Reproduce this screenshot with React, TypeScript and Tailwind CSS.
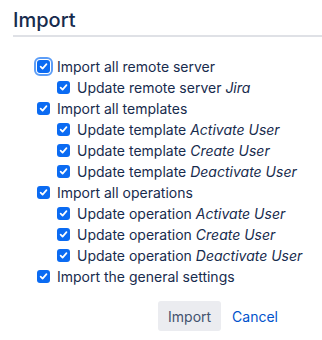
import React, { useState } from 'react';

type Item = { id: string; label: string; em?: string; level: number };

const ITEMS: Item[] = [
  { id: 'remote', label: 'Import all remote server', level: 0 },
  { id: 'remote-jira', label: 'Update remote server ', em: 'Jira', level: 1 },
  { id: 'templates', label: 'Import all templates', level: 0 },
  { id: 'tpl-activate', label: 'Update template ', em: 'Activate User', level: 1 },
  { id: 'tpl-create', label: 'Update template ', em: 'Create User', level: 1 },
  { id: 'tpl-deactivate', label: 'Update template ', em: 'Deactivate User', level: 1 },
  { id: 'operations', label: 'Import all operations', level: 0 },
  { id: 'op-activate', label: 'Update operation ', em: 'Activate User', level: 1 },
  { id: 'op-create', label: 'Update operation ', em: 'Create User', level: 1 },
  { id: 'op-deactivate', label: 'Update operation ', em: 'Deactivate User', level: 1 },
  { id: 'general', label: 'Import the general settings', level: 0 },
];

const Check = ({ focused }: { focused?: boolean }) => (
  <span
    className={`relative flex items-center justify-center w-[13px] h-[13px] rounded-[3px] bg-[#0b6bf2] shrink-0 ${
      focused ? 'outline-2 outline-[#5c9df7] outline-offset-[1px]' : ''
    }`}
  >
    <svg width="9" height="9" viewBox="0 0 10 10" fill="none">
      <path d="M1.8 5.2 L4 7.4 L8.3 2.4" stroke="white" strokeWidth="1.9" strokeLinecap="round" strokeLinejoin="round" />
    </svg>
  </span>
);

export default function App() {
  const [checked] = useState<Record<string, boolean>>(
    Object.fromEntries(ITEMS.map(i => [i.id, true]))
  );

  return (
    <div className="w-[322px] h-[340px] bg-white text-[#172b4d] font-['Inter',sans-serif]">
      <div className="pl-[13px] pt-[8px]">
        <h2 className="text-[20px] font-medium leading-[24px] pb-[3px] border-b-2 border-[#dfe1e6]">Import</h2>
      </div>

      <div className="pt-[19px] pl-[37px] flex flex-col">
        {ITEMS.map((item, idx) => (
          <label
            key={item.id}
            className={`flex items-center gap-[7px] h-[21px] text-[14px] ${item.level ? 'pl-[20px]' : ''}`}
          >
            {checked[item.id] && <Check focused={idx === 0} />}
            <span className="whitespace-nowrap">
              {item.label}
              {item.em && <em>{item.em}</em>}
            </span>
          </label>
        ))}
      </div>

      <div className="flex items-center justify-end gap-[11px] pr-[44px] pt-[14px]">
        <button className="h-[30px] w-[63px] rounded-[3px] bg-[#ebecf0] text-[14px] text-[#42526e]">Import</button>
        <button className="text-[14px] text-[#0052cc]">Cancel</button>
      </div>
    </div>
  );
}
